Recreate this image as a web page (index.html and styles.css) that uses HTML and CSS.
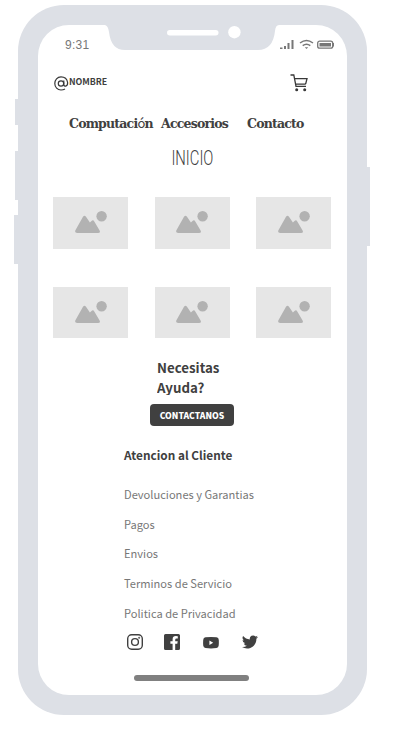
FILE: index.html
```html
<!DOCTYPE html>
<html lang="es">
<head>
<meta charset="utf-8">
<title>Inicio</title>
<link rel="stylesheet" href="styles.css">
</head>
<body>
<div class="phone">
  <span class="side mute"></span><span class="side vol-up"></span><span class="side vol-down"></span><span class="side power"></span>
  <svg class="notch" width="174" height="27" viewBox="0 0 174 27">
    <path fill="#dde0e6" d="M0 0V2Q3 2.500 4 9Q6 27 20 27H153Q168 27 170 8Q170.500 2 174 2V0Z"/>
    <rect x="62" y="7" width="51.500" height="5.500" rx="2.750" fill="#fff"/>
    <circle cx="129.400" cy="9.200" r="6.200" fill="#fff"/>
  </svg>
  <main class="screen">
    <div class="status">
      <span class="time">9:31</span>
      <svg width="55" height="12" viewBox="0 0 55 12" fill="#777">
        <path d="M0 8.500h2.500v1.500H0zM4 7h2v3H4zM7.500 4h2v6h-2zM11.500 1h2v9h-2z"/>
        <path d="M20 4Q26.500-1 33 4M22.700 6.700Q26.500 3.700 30.300 6.700" fill="none" stroke="#777" stroke-width="1.500"/>
        <path d="M24.800 8.300h3.400L26.500 10z"/>
        <rect x="37.700" y="2.200" width="15" height="7" rx="2" fill="none" stroke="#777" stroke-width="1.300"/>
        <path d="M39.500 3.900h11.500v3.600H39.500zM53 4h1v3.400h-1z"/>
      </svg>
    </div>
    <header class="header">
      <div class="brand">
        <svg width="15" height="15" viewBox="0 0 15 15" fill="none" stroke="#383838" stroke-width="1.200">
          <circle cx="7" cy="7.500" r="2.700"/>
          <path d="M9.800 4.600V9Q10.300 10.500 11.800 10.100Q13.900 9.300 13.600 6.500C13 2.700 10 .9 7 .9C3.300.9.8 4 .8 7.500C.8 11.300 3.500 14 7 14Q9.300 14 11 13"/>
        </svg>
        <span>NOMBRE</span>
      </div>
      <svg width="19" height="18" viewBox="0 0 19 18">
        <path d="M.5 1H3.800L6 12.400H16M4.300 4.700H17L15.700 9.800Q15.500 10.200 15 10.200H5.500" fill="none" stroke="#383838" stroke-width="1.300"/>
        <circle cx="6.700" cy="15.800" r="1.500" fill="#383838"/><circle cx="14.700" cy="15.800" r="1.500" fill="#383838"/>
      </svg>
    </header>
    <nav class="nav"><a class="n1">Computaci<span class="accent">ó</span>n</a><a class="n2">Accesorios</a><a>Contacto</a></nav>
    <h1 class="title"><span>INICIO</span></h1>
    <svg class="defs" width="0" height="0"><symbol id="pic" viewBox="0 0 32 23">
      <path fill="#b2b2b2" d="M.4 19.300L8 5.700Q9.500 3.600 11 5.700L14.900 11.500L16.500 9.900Q18.200 8.600 19.300 10.400L24.600 19.400Q25.800 22 23 22H2.200Q-.7 22 .4 19.300Z"/><circle cx="26.600" cy="5.300" r="5.200" fill="#b2b2b2"/>
    </symbol></svg>
    <section class="grid">
      <div class="tile"><svg><use href="#pic"/></svg></div><div class="tile"><svg><use href="#pic"/></svg></div><div class="tile"><svg><use href="#pic"/></svg></div>
      <div class="tile"><svg><use href="#pic"/></svg></div><div class="tile"><svg><use href="#pic"/></svg></div><div class="tile"><svg><use href="#pic"/></svg></div>
    </section>
    <h2 class="help">Necesitas<br>Ayuda?</h2>
    <button class="contact">CONTACTANOS</button>
    <h3 class="support">Atencion al Cliente</h3>
    <ul class="links"><li>Devoluciones y Garantias</li><li>Pagos</li><li>Envios</li><li>Terminos de Servicio</li><li>Politica de Privacidad</li></ul>
    <div class="social">
      <svg width="16" height="16" viewBox="0 0 16 16" fill="none" stroke="#404040" stroke-width="1.400"><rect x=".7" y=".7" width="14.600" height="14.600" rx="4"/><circle cx="8" cy="8" r="3.400"/><circle cx="12.200" cy="3.800" r=".3"/></svg>
      <svg class="fb" width="16" height="16" viewBox="0 0 16 16"><path fill="#404040" d="M1.500 0H14.500Q16 0 16 1.500V14.500Q16 16 14.500 16H11.200V9.800H13.300L13.700 7.300H11.200V5.700Q11.200 4.400 12.600 4.400H13.800V2.300Q8.600 1.200 8.600 5.400V7.300H6.400V9.800H8.600V16H1.500Q0 16 0 14.500V1.500Q0 0 1.500 0Z"/></svg>
      <svg class="yt" width="16" height="16" viewBox="0 0 16 16"><path fill="#404040" fill-rule="evenodd" d="M2.500 3.200Q8 2.600 13.500 3.200Q15.700 3.500 15.800 6Q16 9 15.700 11.500Q15.500 13.900 13.500 14.100Q8 14.700 2.500 14.100Q.5 13.900.2 11.500Q0 8.500.2 6Q.4 3.500 2.500 3.200ZM6.400 6.600V11L10.200 8.800Z"/></svg>
      <svg class="bird" width="16" height="16" viewBox="0 0 24 24"><path fill="#404040" d="M23.950 4.570a10 10 0 0 1-2.820.77 4.960 4.960 0 0 0 2.160-2.720c-.95.550-2 .95-3.120 1.180a4.920 4.920 0 0 0-8.390 4.490C7.690 8.090 4.070 6.130 1.640 3.160a4.920 4.920 0 0 0 1.520 6.570 4.900 4.900 0 0 1-2.230-.610v.060a4.920 4.920 0 0 0 3.950 4.830 5 5 0 0 1-2.210.080 4.940 4.940 0 0 0 4.600 3.420A9.870 9.870 0 0 1 0 19.540a14 14 0 0 0 7.550 2.210c9.050 0 14-7.500 14-13.980 0-.210 0-.420-.020-.630a9.900 9.900 0 0 0 2.420-2.570z"/></svg>
    </div>
    <div class="home"></div>
  </main>
</div>
</body>
</html>
```
FILE: styles.css
```css
* { box-sizing: border-box; }
body { margin: 0; background: #fff; color: #404040; font-family: "Noto Sans CJK SC", "Open Sans", sans-serif; overflow: hidden; }
svg { display: block; flex: none; }
.phone { position: relative; width: 349px; height: 710px; margin: 5px 0 0 18px; padding: 20px; background: #dde0e6; border-radius: 46px; }
.side { position: absolute; background: #dde0e6; }
.mute { left: -3px; top: 94px; width: 4px; height: 26px; }
.vol-up { left: -3px; top: 146px; width: 4px; height: 49px; }
.vol-down { left: -4px; top: 210px; width: 5px; height: 49px; }
.power { right: -3px; top: 162px; width: 4px; height: 79px; }
.notch { position: absolute; z-index: 1; left: 87px; top: 18px; }
.screen { width: 309px; height: 670px; padding: 0 15px; background: #fff; border-radius: 31px; display: flex; flex-direction: column; }
.status { height: 39px; display: flex; align-items: center; justify-content: space-between; padding: 0 0 0 12px; }
.status svg { margin-right: -3px; }
.time { font: 12px/14px "Liberation Sans", sans-serif; letter-spacing: .3px; color: #777; }
.header { height: 38px; display: flex; align-items: center; justify-content: space-between; padding: 0 23px 0 1px; }
.brand { display: flex; align-items: center; font-size: 8.800px; line-height: 14px; font-weight: 700; }
.brand span { margin-top: -2px; }
.nav { height: 43px; display: flex; align-items: center; padding-left: 16px; white-space: nowrap; font: 700 12.500px/18px "DejaVu Serif", serif; letter-spacing: -.8px; }
.n1 { width: 92px; }
.n2 { width: 86px; }
.accent { font: 400 13px/13px "Noto Sans CJK SC", sans-serif; }
.title { margin: 0; height: 26px; text-align: center; font: 300 20px/26px Roboto, sans-serif; }
.title span { display: inline-block; transform: scaleX(.74); }
.defs { position: absolute; }
.grid { margin: 26px 0 0; display: grid; grid-template-columns: repeat(3, 75px); gap: 38px 26.5px; }
.tile { height: 51.500px; display: flex; align-items: center; justify-content: center; background: #e6e6e6; }
.tile svg { width: 32px; height: 23px; }
.help { margin: 20px 0 0 104px; height: 37px; overflow: hidden; font-size: 13.300px; line-height: 20px; font-weight: 700; }
.contact { margin: 9px 0 0 97px; width: 84px; height: 22px; padding: 0; border: 0; border-radius: 4px; background: #404040; color: #fff; font: 900 8.600px/22px "Noto Sans CJK SC", sans-serif; white-space: nowrap; }
.support { margin: 19px 0 0 71px; font-size: 11.800px; line-height: 20px; font-weight: 700; }
.links { margin: 15px 0 0 71px; padding: 0; list-style: none; font-size: 11.100px; color: #777; }
.links li { height: 29.700px; line-height: 29.700px; }
.social { display: flex; width: 130px; margin: 6px 0 0 74px; }
.fb { margin-left: 21px; }
.yt { margin-left: 23px; }
.bird { margin-left: 22.500px; }
.home { width: 115px; height: 6px; margin: 25px 0 0 81px; border-radius: 3px; background: #808080; }
```
